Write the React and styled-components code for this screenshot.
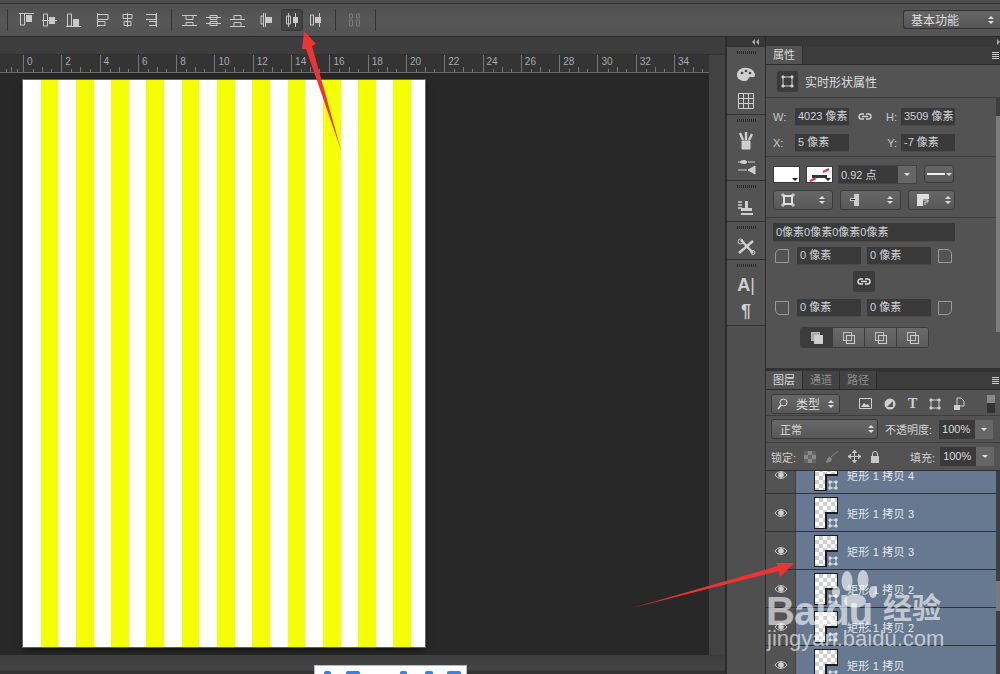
import styled, { createGlobalStyle } from "styled-components";

const GlobalStyle = createGlobalStyle`
    html, body { margin: 0; padding: 0; background: #282828; }
    * { box-sizing: border-box; }
    body { font-family: "Liberation Sans", "Noto Sans CJK SC", sans-serif; }
`

const Page = styled.div`
    position: relative;
    width: 1000px;
    height: 674px;
    overflow: hidden;
    display: flex;
    flex-direction: column;
    background: #282828;
    color: #d0d0d0;
    font-size: 11px;
`

/* options bar */
const OptionsBar = styled.div`
    flex: none;
    height: 37px;
    display: flex;
    align-items: center;
    padding-top: 3px;
    background: linear-gradient(#4d4d4d 0 3px, #333 3px 4px, #505050 4px, #575757 20px, #535353);
    border-bottom: 1px solid #2b2b2b;
`
const ToolSep = styled.div`
    flex: none;
    width: 1px;
    height: 22px;
    margin: ${({$m}) => $m || '0 8px'};
    background: #333;
`
const ToolBtn = styled.div`
    flex: none;
    width: 20px;
    height: 20px;
    margin-right: ${({$gap}) => $gap}px;
    display: flex;
    align-items: center;
    justify-content: center;
    border-radius: 2px;
    color: #c9c9c9;
    ${({$active}) => $active ? `
        background: #444;
        box-shadow: 0 0 0 1px #383838;
    ` : ''}
    ${({$dim}) => $dim ? 'color: #7b7b7b;' : ''}
`
const Workspace = styled.div`
    margin-left: auto;
    width: 97px;
    height: 19px;
    display: flex;
    align-items: center;
    justify-content: space-between;
    padding: 0 3px 0 7px;
    border: 1px solid #333;
    border-right: none;
    border-radius: 3px 0 0 3px;
    background: linear-gradient(#666, #555);
    font-size: 12px;
    color: #dcdcdc;
`

/* main */
const Main = styled.div`
    flex: 1;
    min-height: 0;
    display: flex;
`
const DocArea = styled.div`
    flex: none;
    width: 727px;
    display: flex;
    flex-direction: column;
    background: #424242;
    border-right: 2px solid #2c2c2c;
`
const DocTabs = styled.div`
    flex: none;
    height: 18px;
    background: #3d3d3d;
    border-bottom: 1px solid #333;
`
const Ruler = styled.div`
    flex: none;
    height: 18px;
    display: flex;
    background: #343434;
    border-bottom: 1px solid #6a6a6a;
    margin-right: 16px;
    overflow: hidden;
`
const RulerCell = styled.div`
    flex: none;
    width: ${({$w}) => $w}px;
    height: 17px;
    padding: 1px 0 0 3px;
    font-size: 10px;
    line-height: 12px;
    color: #a3a9b2;
    border-left: ${({$first}) => $first ? 'none' : '1px solid #777'};
    background-image:
        linear-gradient(#777, #777),
        linear-gradient(#777, #777),
        linear-gradient(#777, #777);
    background-repeat: no-repeat;
    background-size: 1px 3px, 1px 5px, 1px 3px;
    background-position: 25% 100%, 50% 100%, 75% 100%;
`
const DocBody = styled.div`
    flex: 1;
    min-height: 0;
    display: flex;
    flex-direction: column;
`
const DocMiddle = styled.div`
    flex: 1;
    min-height: 0;
    display: flex;
`
const Pasteboard = styled.div`
    flex: 1;
    padding: 7px 0 0 23px;
    background: #282828;
`
const DocScroll = styled.div`
    flex: none;
    width: 16px;
    background: #424242;
`
const Artboard = styled.div`
    width: 402px;
    height: 567px;
    display: flex;
    overflow: hidden;
    box-shadow: 0 0 0 1px rgba(170,170,170,.5), 0 3px 6px rgba(0,0,0,.6);
`
const Stripe = styled.div`
    flex: none;
    width: 17.65px;
    background: ${({$yellow}) => $yellow ? '#f4ff06' : '#ffffff'};
`
const StatusBar = styled.div`
    flex: none;
    height: 19px;
    background: linear-gradient(#3d3d3d, #454545 15px, #333 16px);
`

/* dock */
const Dock = styled.div`
    flex: none;
    width: 39px;
    display: flex;
    flex-direction: column;
    background: #4f4f4f;
    border-right: 1px solid #2c2c2c;
`
const TopStrip = styled.div`
    flex: none;
    height: 10px;
    display: flex;
    align-items: center;
    justify-content: flex-end;
    gap: 1px;
    padding-right: ${({$end}) => $end ? 0 : 6}px;
    background: #383838;
`
const CollapseTri = styled.div`
    border-top: 3px solid transparent;
    border-bottom: 3px solid transparent;
    border-${({$right}) => $right ? 'left' : 'right'}: 3px solid #aaa;
`
const DockGroup = styled.div`
    display: flex;
    flex-direction: column;
    align-items: center;
    height: ${({$h}) => $h}px;
    padding-top: 4px;
    background: #535353;
    border-top: 1px solid #333;
    border-bottom: 1px solid #333;
    margin-top: -1px;
`
const Grip = styled.div`
    width: 19px;
    height: 3px;
    margin-bottom: 6px;
    background: repeating-linear-gradient(90deg, #262626 0 1px, #5c5c5c 1px 2px);
`
const DockIcon = styled.div`
    height: 27px;
    display: flex;
    align-items: center;
    justify-content: center;
    color: #cfcfcf;
    font-size: 18px;
`
const ThinBar = styled.span`
    font-weight: 200;
`

/* panels */
const Panels = styled.div`
    flex: 1;
    min-width: 0;
    display: flex;
    flex-direction: column;
    background: #333;
`
const PanelTabs = styled.div`
    flex: none;
    height: 18px;
    display: flex;
    align-items: flex-end;
    background: #3c3c3c;
    border-bottom: 1px solid #2c2c2c;
    position: relative;
`
const PanelTab = styled.div`
    height: 18px;
    padding: 0 7px;
    line-height: 18px;
    font-size: 11px;
    color: ${({$active}) => $active ? '#dadada' : '#8f8f8f'};
    background: ${({$active}) => $active ? '#535353' : '#434343'};
    border-right: 1px solid #2c2c2c;
`
const PanelMenu = styled.div`
    position: absolute;
    right: 1px;
    top: 5px;
    width: 7px;
    height: 7px;
    background: repeating-linear-gradient(#ccc 0 1px, transparent 1px 2px);
`
const PropsPanel = styled.div`
    position: relative;
    flex: none;
    height: 303px;
    background: #535353;
`
const PropScroll = styled.div`
    position: absolute;
    right: 0;
    top: 33px;
    bottom: 36px;
    width: 4px;
    background: #3e3e3e;
`
const PropThumb = styled.div`
    position: absolute;
    left: 0;
    top: 18px;
    bottom: 0;
    width: 4px;
    background: #7c7c7c;
`
const Header = styled.div`
    height: 33px;
    display: flex;
    align-items: center;
    gap: 7px;
    padding-left: 11px;
    font-size: 12px;
    color: #dcdcdc;
    border-bottom: 1px solid #3d3d3d;
`
const ShapeBadge = styled.div`
    width: 21px;
    height: 21px;
    display: flex;
    align-items: center;
    justify-content: center;
    border-radius: 2px;
    background: #3b3b3b;
    color: #cfcfcf;
`
const Section = styled.div`
    padding: ${({$p}) => $p || '0 7px'};
    border-bottom: ${({$end}) => $end ? 'none' : '1px solid #3f3f3f'};
`
const SizeRow = styled.div`
    display: grid;
    grid-template-columns: 22px 54px 31px 21px 54px;
    align-items: center;
    height: 18px;
    margin-bottom: ${({$mb}) => $mb || 0}px;
    font-size: 11px;
`
const SizeLabel = styled.span`
    text-align: ${({$right}) => $right ? 'right' : 'left'};
    padding-right: ${({$right}) => $right ? '4px' : '0'};
    color: #c8c8c8;
`
const Field = styled.div`
    height: ${({$h}) => $h || 18}px;
    width: ${({$w}) => $w ? `${$w}px` : 'auto'};
    padding-left: 3px;
    background: #3a3a3a;
    border-bottom: 1px solid #4a4a4a;
    color: #cfd3d9;
    font-size: 11px;
    line-height: ${({$h}) => ($h || 18) - 1}px;
    white-space: nowrap;
    overflow: hidden;
`
const LinkCell = styled.div`
    display: flex;
    justify-content: center;
    color: #cfcfcf;
`
const StrokeRow = styled.div`
    display: flex;
    align-items: center;
    gap: 6px;
    height: 18px;
`
const Swatch = styled.div`
    position: relative;
    width: 27px;
    height: 17px;
    background: #fff;
    border: 1px solid #3a3a3a;
`
const SwatchCorner = styled.div`
    position: absolute;
    right: 1px;
    bottom: 1px;
    border-top: 3px solid #222;
    border-left: 3px solid transparent;
    border-right: 3px solid transparent;
`
const Combo = styled.div`
    width: 79px;
    height: 19px;
    display: flex;
    align-items: center;
    justify-content: space-between;
    margin-left: -1px;
    padding-left: 2px;
    background: #3a3a3a;
    border: 1px solid #444;
    font-size: 11px;
    color: #cfd3d9;
`
const ComboArrow = styled.div`
    width: 18px;
    height: 100%;
    display: flex;
    align-items: center;
    justify-content: center;
    background: #666;
`
const Triangle = styled.div`
    border-top: 3px solid #ddd;
    border-left: 3px solid transparent;
    border-right: 3px solid transparent;
`
const LineStyle = styled.div`
    width: 30px;
    height: 18px;
    display: flex;
    align-items: center;
    justify-content: center;
    gap: 1px;
    margin-left: 1px;
    background: linear-gradient(#676767, #575757);
    border: 1px solid #3a3a3a;
    border-radius: 3px;
`
const LineDash = styled.div`
    width: 18px;
    height: 2px;
    background: #eee;
`
const SelectRow = styled.div`
    display: flex;
    gap: 7px;
    margin-top: 7px;
    height: 20px;
`
const Select = styled.div`
    width: ${({$w}) => $w}px;
    height: 20px;
    display: flex;
    align-items: center;
    justify-content: space-between;
    padding: 0 3px 0 ${({$pl}) => $pl || 7}px;
    border: 1px solid #3a3a3a;
    border-radius: 3px;
    background: linear-gradient(#676767, #585858);
    color: #ddd;
`
const Updown = styled.div`
    display: flex;
    flex-direction: column;
    gap: 2px;
    margin-right: ${({$r}) => $r || 0}px;
`
const UpTri = styled.div`
    border-bottom: 3px solid #ddd;
    border-left: 3px solid transparent;
    border-right: 3px solid transparent;
`
const CornerRow = styled.div`
    display: flex;
    align-items: center;
    gap: 6px;
    height: 18px;
    margin-top: ${({$mt}) => $mt || 0}px;
`
const CornerIcon = styled.div`
    flex: none;
    width: 14px;
    height: 14px;
    margin: ${({$right}) => $right ? '0 0 0 1px' : '0 2px'};
    border: 1px solid #999;
    border-radius: ${({$r}) => $r};
`
const LinkBtn = styled.div`
    width: 22px;
    height: 21px;
    margin: 6px 0 7px 80px;
    display: flex;
    align-items: center;
    justify-content: center;
    border-radius: 2px;
    background: #3b3b3b;
    color: #ddd;
`
const OpSpacer = styled.div`
    height: 5px;
`
const OpGroup = styled.div`
    display: flex;
    width: 129px;
    height: 21px;
    margin-left: 34px;
    border: 1px solid #3c3c3c;
    border-radius: 3px;
    overflow: hidden;
`
const OpBtn = styled.div`
    flex: 1;
    display: flex;
    align-items: center;
    justify-content: center;
    background: ${({$active}) => $active ? '#3c3c3c' : 'linear-gradient(#6a6a6a, #5b5b5b)'};
    border-left: ${({$active}) => $active ? 'none' : '1px solid #3c3c3c'};
    color: #ccc;
`

/* layers */
const LayersPanel = styled.div`
    flex: 1;
    min-height: 0;
    margin-top: 4px;
    display: flex;
    flex-direction: column;
    background: #535353;
`
const FilterRow = styled.div`
    flex: none;
    height: 26px;
    display: flex;
    align-items: center;
    padding: 2px 5px 0 5px;
    border-bottom: 1px solid #3f3f3f;
`
const KindSelect = styled(Select)`
    height: 20px;
    font-size: 12px;
    gap: 4px;
    padding: 0 3px 0 5px;
`
const FilterIcons = styled.div`
    display: flex;
    align-items: center;
    gap: 12px;
    margin-left: 19px;
    color: #cfcfcf;
`
const FilterSerif = styled.span`
    font-family: "Liberation Serif", serif;
    font-size: 14px;
    font-weight: bold;
`
const FilterSwitch = styled.div`
    flex: none;
    width: 8px;
    height: 18px;
    margin-left: auto;
    background: linear-gradient(#888 0 8px, #333 8px);
`
const BlendRow = styled.div`
    flex: none;
    height: 27px;
    display: flex;
    align-items: center;
    padding: 0 0 0 5px;
    border-bottom: 1px solid #3f3f3f;
`
const RowLabel = styled.span`
    margin-left: ${({$m}) => $m || 0}px;
    font-size: 11px;
    color: #cfcfcf;
    white-space: nowrap;
`
const Percent = styled.div`
    display: flex;
    flex: none;
    width: 54px;
    height: 19px;
    margin-left: ${({$m}) => $m || 5}px;
    background: #3a3a3a;
    font-size: 11px;
    line-height: 19px;
    padding-left: 3px;
    color: #ddd;
    position: relative;
`
const PercentBtn = styled.div`
    position: absolute;
    right: 0;
    top: 0;
    width: 18px;
    height: 19px;
    display: flex;
    align-items: center;
    justify-content: center;
    background: #666;
`
const LockRow = styled.div`
    flex: none;
    height: 28px;
    display: flex;
    align-items: center;
    padding-left: 5px;
    border-bottom: 1px solid #333;
`
const LockIcons = styled.div`
    display: flex;
    align-items: center;
    gap: 9px;
    width: 106px;
    margin-left: 8px;
    color: #c8c8c8;
`
const LayerClip = styled.div`
    flex: 1;
    min-height: 0;
    overflow: hidden;
    position: relative;
    padding-right: 4px;
`
const LayerList = styled.div`
    margin-top: -15px;
`
const LayerRow = styled.div`
    height: 38px;
    display: flex;
    align-items: center;
    border-bottom: 1px solid #333;
`
const EyeCell = styled.div`
    flex: none;
    width: 30px;
    height: 100%;
    display: flex;
    align-items: center;
    justify-content: center;
    color: #ccc;
    background: #535353;
    border-right: 1px solid #3f3f3f;
`
const LayerBody = styled.div`
    flex: 1;
    height: 100%;
    display: flex;
    align-items: center;
    padding-left: 18px;
    background: #677990;
`
const Thumb = styled.div`
    position: relative;
    flex: none;
    width: 24px;
    height: 32px;
    border: 1px solid #1d1d1d;
    background-color: #fff;
    background-image:
        linear-gradient(45deg, #cfcfcf 25%, transparent 25%, transparent 75%, #cfcfcf 75%),
        linear-gradient(45deg, #cfcfcf 25%, transparent 25%, transparent 75%, #cfcfcf 75%);
    background-size: 8px 8px;
    background-position: 0 0, 4px 4px;
`
const ThumbNotch = styled.div`
    position: absolute;
    right: -1px;
    bottom: -1px;
    width: 13px;
    height: 17px;
    display: flex;
    align-items: flex-end;
    justify-content: center;
    padding-bottom: 1px;
    background: #677990;
    border-top: 2px solid #1d1d1d;
    border-left: 2px solid #1d1d1d;
    color: #d8dde4;
`
const LayerName = styled.span`
    margin-left: 9px;
    font-size: 11px;
    color: #e6e9ee;
    letter-spacing: .2px;
`
const LayerScroll = styled.div`
    position: absolute;
    right: 0;
    top: 0;
    bottom: 0;
    width: 4px;
    background: #3e3e3e;
`
const LayerThumb = styled.div`
    position: absolute;
    top: 110px;
    left: 0;
    width: 4px;
    height: 30px;
    background: #7a7a7a;
`

/* overlays */
const Arrows = styled.svg`
    position: absolute;
    left: 0;
    top: 0;
    pointer-events: none;
`
const Watermark = styled.div`
    position: absolute;
    left: 766px;
    top: 568px;
    width: 190px;
    height: 84px;
    color: rgba(255,255,255,.62);
`
const WmBai = styled.div`
    position: absolute;
    left: 0;
    top: 21px;
    font-size: 40px;
    font-weight: bold;
    line-height: 44px;
    letter-spacing: -1px;
`
const WmCn = styled.div`
    position: absolute;
    left: 117px;
    top: 24px;
    font-size: 29px;
    line-height: 34px;
    font-weight: bold;
`
const WmUrl = styled.div`
    position: absolute;
    left: 1px;
    top: 58px;
    font-size: 22px;
    line-height: 26px;
`
const WmPaw = styled.svg`
    position: absolute;
    left: 60px;
    top: 0;
`
const Widget = styled.div`
    position: absolute;
    left: 314px;
    top: 665px;
    width: 153px;
    height: 9px;
    display: flex;
    align-items: flex-start;
    padding: 5px 0 0 9px;
    background: #fff;
    border: 1px solid #b5bac4;
    border-bottom: none;
`
const WidgetMark = styled.div`
    width: ${({$w}) => $w}px;
    height: 5px;
    margin-left: ${({$ml}) => $ml || 0}px;
    background: #3f7fe0;
    border-radius: 2px 2px 0 0;
`

const Ic = ({ w = 18, h = 16, children }) => (
    <svg width={w} height={h} viewBox={`0 0 ${w} ${h}`} fill="none" stroke="currentColor" strokeWidth="1">
        {children}
    </svg>
)

const alignIcons = [
    <><path d="M1 1.5h15M2.5 2v11h4V2"/><rect x="8" y="3" width="6" height="7" fill="currentColor" stroke="none"/></>,
    <><path d="M1 8.5h15M2.5 2v12h4V2z"/><rect x="8" y="5" width="6" height="7" fill="currentColor" stroke="none"/></>,
    <><path d="M1 14.5h15M2.5 2v12h4V2z"/><rect x="8" y="7" width="6" height="7" fill="currentColor" stroke="none"/></>,
    <><path d="M2.5 1v14M3 2.5h10v5H3M3 9.5h7v4H3"/></>,
    <><path d="M8.5 1v14M4 2.5h9v4H4zM5 9.5h7v4H5z"/></>,
    <><path d="M14.5 1v14M4 2.5h10v5H4M7 9.5h7v4H7"/></>,
    <><path d="M1 3.5h15M1 13.5h15M5 3.5v4h7v-4M5 13.5v-3h7v3"/></>,
    <><path d="M1 5.5h15M1 11.5h15M5 3.5h7v4H5zM5 9.5h7v4H5z"/></>,
    <><path d="M1 7.5h15M1 14.5h15M5 7.5v-4h7v4M5 14.5v-4h7v4"/></>,
    <><path d="M4.5 1v14M4.5 4H2v8h2.5"/><rect x="7" y="5" width="6" height="6" fill="currentColor" stroke="none"/><path d="M6.5 1v14"/></>,
    <><path d="M5.5 1v14M12.5 1v14M3.5 4h4v8h-4z"/><rect x="10" y="5" width="5" height="6" fill="currentColor" stroke="none"/></>,
    <><path d="M12.5 1v14M3.5 3v10h3V3z"/><rect x="8" y="5" width="6" height="6" fill="currentColor" stroke="none"/></>,
]

const LinkIcon = () => (
    <Ic w={14} h={8}>
        <path d="M6 1H3.5a2.5 2.5 0 0 0 0 5H6M8 1h2.5a2.5 2.5 0 0 1 0 5H8M4 3.5h6" strokeWidth="1.4"/>
    </Ic>
)

const ShapeIcon = ({ s = 13 }) => (
    <Ic w={s} h={s}>
        <rect x="2" y="2" width={s - 4} height={s - 4}/>
        <path d={`M1 1h2v2H1zM${s - 3} 1h2v2h-2zM1 ${s - 3}h2v2H1zM${s - 3} ${s - 3}h2v2h-2z`} fill="currentColor"/>
    </Ic>
)

const Eye = () => (
    <Ic w={14} h={10}>
        <path d="M1 5c3-4.5 9-4.5 12 0-3 4.5-9 4.5-12 0z"/>
        <circle cx="7" cy="5" r="2.4" fill="currentColor"/>
    </Ic>
)

const OpIcon = ({ fill }) => (
    <Ic w={14} h={14}>
        <rect x="1.5" y="1.5" width="8" height="8" fill={fill ? '#aaa' : 'none'} stroke="#bbb"/>
        <rect x="4.5" y="4.5" width="8" height="8" fill={fill ? '#d0d0d0' : 'none'} stroke="#ccc"/>
    </Ic>
)

const dockGroups = [
    { h: 69, icons: [
        <Ic w={20} h={16}><path d="M1 9c0-5 5-8 10-7 5 0 8 4 8 7s-3 2-5 2-1 4-5 4-8-2-8-6z" fill="currentColor" stroke="none"/><circle cx="6" cy="7" r="1.3" fill="#444" stroke="none"/><circle cx="10" cy="5" r="1.3" fill="#444" stroke="none"/><circle cx="14" cy="7" r="1.3" fill="#444" stroke="none"/></Ic>,
        <Ic w={16} h={16}><path d="M.5.5h15v15H.5zM5.5.5v15M10.5.5v15M.5 5.5h15M.5 10.5h15" stroke="currentColor"/></Ic>,
    ] },
    { h: 67, icons: [
        <Ic w={16} h={19}><path d="M4 10h8v8H4z" fill="currentColor"/><path d="M5 9L2 2M8 9V1M11 9l3-6" strokeWidth="2.4"/></Ic>,
        <Ic w={19} h={16}><path d="M1 3h9M1 11h9"/><path d="M3 3c2-2 6-2 7 0-1 2-5 2-7 0zM11 11l7-4v8z" fill="currentColor"/><path d="M11 3h7"/></Ic>,
    ] },
    { h: 42, icons: [
        <Ic w={18} h={16}><path d="M1 2h4M1 5h4M1 8h4" strokeWidth="1.4"/><path d="M8 1h3v7h4v3H4V8h4zM4 13h12v2H4z" fill="currentColor" stroke="none"/></Ic>,
    ] },
    { h: 39, icons: [
        <Ic w={19} h={17}><path d="M2 15L16 3M4 2l12 13" strokeWidth="2.4"/><circle cx="3.5" cy="3.5" r="2.5"/><circle cx="16" cy="14.5" r="2"/></Ic>,
    ] },
    { h: 67, icons: [
        <span><b>A</b><ThinBar>|</ThinBar></span>,
        <span><b>¶</b></span>,
    ] },
]

const layers = ['矩形 1 拷贝 4', '矩形 1 拷贝 3', '矩形 1 拷贝 3', '矩形 1 拷贝 2', '矩形 1 拷贝 2', '矩形 1 拷贝']

const firstGaps = [3, 4, 10, 4, 3, 0]
const secondGaps = [4, 4, 10, 4, 4, 0]

export default function App() {
    return (
        <Page>
            <GlobalStyle />
            <OptionsBar>
                <ToolSep $m="0 9px 0 7px" />
                {alignIcons.slice(0, 6).map((icon, i) => (
                    <ToolBtn key={i} $gap={firstGaps[i]}><Ic>{icon}</Ic></ToolBtn>
                ))}
                <ToolSep $m="0 8px 0 10px" />
                {alignIcons.slice(6).map((icon, i) => (
                    <ToolBtn key={i} $gap={secondGaps[i]} $active={i === 4}><Ic>{icon}</Ic></ToolBtn>
                ))}
                <ToolSep $m="0 9px 0 9px" />
                <ToolBtn $dim $gap={10}><Ic><path d="M3.5 2h3v4h-3zM3.5 8h3v6h-3zM10.5 2h3v4h-3zM10.5 8h3v6h-3z"/></Ic></ToolBtn>
                <ToolSep $m="0" />
                <Workspace>
                    基本功能
                    <Updown $r={3}><UpTri /><Triangle /></Updown>
                </Workspace>
            </OptionsBar>
            <Main>
                <DocArea>
                    <DocTabs />
                    <Ruler>
                        <RulerCell $first $w={23} />
                        {Array.from({ length: 18 }, (_, i) => (
                            <RulerCell key={i} $w={38.3}>{i * 2}</RulerCell>
                        ))}
                    </Ruler>
                    <DocBody>
                        <DocMiddle>
                            <Pasteboard>
                                <Artboard>
                                    {Array.from({ length: 23 }, (_, i) => <Stripe key={i} $yellow={i % 2 === 1} />)}
                                </Artboard>
                            </Pasteboard>
                            <DocScroll />
                        </DocMiddle>
                        <StatusBar />
                    </DocBody>
                </DocArea>
                <Dock>
                    <TopStrip><CollapseTri /><CollapseTri /></TopStrip>
                    {dockGroups.map((group, i) => (
                        <DockGroup key={i} $h={group.h}>
                            <Grip />
                            {group.icons.map((icon, k) => <DockIcon key={k}>{icon}</DockIcon>)}
                        </DockGroup>
                    ))}
                </Dock>
                <Panels>
                    <TopStrip $end><CollapseTri $right /></TopStrip>
                    <PanelTabs>
                        <PanelTab $active>属性</PanelTab>
                        <PanelMenu />
                    </PanelTabs>
                    <PropsPanel>
                        <Header>
                            <ShapeBadge><ShapeIcon /></ShapeBadge>
                            实时形状属性
                        </Header>
                        <Section $p="10px 7px 4px">
                            <SizeRow $mb={8}>
                                <SizeLabel>W:</SizeLabel>
                                <Field>4023 像素</Field>
                                <LinkCell><LinkIcon /></LinkCell>
                                <SizeLabel $right>H:</SizeLabel>
                                <Field>3509 像素</Field>
                            </SizeRow>
                            <SizeRow>
                                <SizeLabel>X:</SizeLabel>
                                <Field>5 像素</Field>
                                <span />
                                <SizeLabel $right>Y:</SizeLabel>
                                <Field>-7 像素</Field>
                            </SizeRow>
                        </Section>
                        <Section $p="8px 7px 7px">
                            <StrokeRow>
                                <Swatch><SwatchCorner /></Swatch>
                                <Swatch>
                                    <svg width="25" height="15" viewBox="0 0 25 15">
                                        <path d="M5 8h15v3H5z" fill="#333"/>
                                        <path d="M3 14l6-3M16 5l6-3" stroke="#e33" strokeWidth="2"/>
                                    </svg>
                                    <SwatchCorner />
                                </Swatch>
                                <Combo>
                                    0.92 点
                                    <ComboArrow><Triangle /></ComboArrow>
                                </Combo>
                                <LineStyle><LineDash /><Triangle /></LineStyle>
                            </StrokeRow>
                            <SelectRow>
                                <Select $w={60}>
                                    <Ic w={14} h={14}><rect x="3" y="3" width="8" height="8" strokeWidth="2"/><path d="M1 1h2v2H1zM11 1h2v2h-2zM1 11h2v2H1zM11 11h2v2h-2z"/></Ic>
                                    <Updown $r={4}><UpTri /><Triangle /></Updown>
                                </Select>
                                <Select $w={61}>
                                    <Ic w={14} h={14}><path d="M6 1h5v12H6zM2 5h5v3H2z" fill="#ccc" stroke="none"/><path d="M3 6.5h4" stroke="#222"/></Ic>
                                    <Updown $r={4}><UpTri /><Triangle /></Updown>
                                </Select>
                                <Select $w={47}>
                                    <Ic w={14} h={14}><path d="M1 1h12v5H7v7H1z" fill="#ddd" stroke="none"/><path d="M7 7h5v2H9v3" fill="none" stroke="#ddd"/></Ic>
                                    <Updown><UpTri /><Triangle /></Updown>
                                </Select>
                            </SelectRow>
                        </Section>
                        <Section $p="5px 7px 5px" $end>
                            <Field $h={19} $w={182}>0像素0像素0像素0像素</Field>
                            <CornerRow $mt={5}>
                                <CornerIcon $r="5px 0 0 0" />
                                <Field $w={64}>0 像素</Field>
                                <Field $w={64}>0 像素</Field>
                                <CornerIcon $right $r="0 5px 0 0" />
                            </CornerRow>
                            <LinkBtn><LinkIcon /></LinkBtn>
                            <CornerRow>
                                <CornerIcon $r="0 0 0 5px" />
                                <Field $w={64}>0 像素</Field>
                                <Field $w={64}>0 像素</Field>
                                <CornerIcon $right $r="0 0 5px 0" />
                            </CornerRow>
                        </Section>
                        <Section $p="0" $end>
                            <OpSpacer />
                            <OpGroup>
                                <OpBtn $active><OpIcon fill /></OpBtn>
                                <OpBtn><OpIcon /></OpBtn>
                                <OpBtn><OpIcon /></OpBtn>
                                <OpBtn><OpIcon /></OpBtn>
                            </OpGroup>
                        </Section>
                        <PropScroll><PropThumb /></PropScroll>
                    </PropsPanel>
                    <LayersPanel>
                        <PanelTabs>
                            <PanelTab $active>图层</PanelTab>
                            <PanelTab>通道</PanelTab>
                            <PanelTab>路径</PanelTab>
                            <PanelMenu />
                        </PanelTabs>
                        <FilterRow>
                            <KindSelect $w={69}>
                                <Ic w={11} h={12}><circle cx="6.5" cy="4.5" r="3.5"/><path d="M4 7l-3 4" strokeWidth="1.6"/></Ic>
                                类型
                                <Updown $r={2}><UpTri /><Triangle /></Updown>
                            </KindSelect>
                            <FilterIcons>
                                <Ic w={13} h={11}><path d="M.5.5h12v10H.5z"/><path d="M2 9l3-4 2 2 2-1 2 3z" fill="currentColor" stroke="none"/></Ic>
                                <Ic w={12} h={12}><circle cx="6" cy="6" r="5.5" fill="currentColor" stroke="none"/><path d="M3 9l6-6v6z" fill="#555" stroke="none"/></Ic>
                                <FilterSerif>T</FilterSerif>
                                <ShapeIcon s={12} />
                                <Ic w={12} h={14}><path d="M4 1h4l3 3v5H4z"/><path d="M1 8h6v5H1z" fill="currentColor" stroke="none"/></Ic>
                            </FilterIcons>
                            <FilterSwitch />
                        </FilterRow>
                        <BlendRow>
                            <Select $w={107} $pl={8}>
                                正常
                                <Updown><UpTri /><Triangle /></Updown>
                            </Select>
                            <RowLabel $m={7}>不透明度:</RowLabel>
                            <Percent $m={7}>100%<PercentBtn><Triangle /></PercentBtn></Percent>
                        </BlendRow>
                        <LockRow>
                            <RowLabel>锁定:</RowLabel>
                            <LockIcons>
                                <Ic w={12} h={12}><path d="M0 0h12v12H0z" fill="#8a8a8a" stroke="none"/><path d="M0 0h4v4H0zM8 0h4v4H8zM4 4h4v4H4zM0 8h4v4H0zM8 8h4v4H8z" fill="#666" stroke="none"/></Ic>
                                <Ic w={14} h={13}><path d="M13 1L6 7M5 7c-2 0-2 3-4 5 3 0 6 0 5-4" stroke="#888" fill="#888"/></Ic>
                                <Ic w={13} h={13}><path d="M6.5 0v13M0 6.5h13M6.5 0L4.5 2.5h4zM6.5 13l-2-2.5h4zM0 6.5L2.5 4.500v4zM13 6.5l-2.5-2v4z"/></Ic>
                                <Ic w={10} h={12}><path d="M2.5 5V3a2.5 2.5 0 0 1 5 0v2"/><rect x="1" y="5" width="8" height="7" fill="currentColor" stroke="none"/></Ic>
                            </LockIcons>
                            <RowLabel>填充:</RowLabel>
                            <Percent>100%<PercentBtn><Triangle /></PercentBtn></Percent>
                        </LockRow>
                        <LayerClip>
                            <LayerList>
                                {layers.map((name, i) => (
                                    <LayerRow key={i}>
                                        <EyeCell><Eye /></EyeCell>
                                        <LayerBody>
                                            <Thumb>
                                                <ThumbNotch><ShapeIcon s={10} /></ThumbNotch>
                                            </Thumb>
                                            <LayerName>{name}</LayerName>
                                        </LayerBody>
                                    </LayerRow>
                                ))}
                            </LayerList>
                            <LayerScroll><LayerThumb /></LayerScroll>
                        </LayerClip>
                    </LayersPanel>
                </Panels>
            </Main>
            <Watermark>
                <WmPaw width="60" height="40" viewBox="0 0 60 40">
                    <g fill="currentColor">
                        <ellipse cx="21" cy="13" rx="5.5" ry="10"/>
                        <ellipse cx="37" cy="12" rx="5.5" ry="10"/>
                        <ellipse cx="10" cy="24" rx="4" ry="6"/>
                        <ellipse cx="47" cy="24" rx="4" ry="6"/>
                        <ellipse cx="29" cy="33" rx="11" ry="7"/>
                    </g>
                </WmPaw>
                <WmBai>Baidu</WmBai>
                <WmCn>经验</WmCn>
                <WmUrl>jingyan.baidu.com</WmUrl>
            </Watermark>
            <Arrows width="1000" height="674" viewBox="0 0 1000 674">
                <path d="M304 31L316 44 312 46 341 150 306 49 302 49z" fill="#ee3333"/>
                <path d="M632 608L778 566 776 563 794 563 780 577 779 571z" fill="#ee3333"/>
            </Arrows>
            <Widget>
                <WidgetMark $w={7} />
                <WidgetMark $w={14} $ml={15} />
                <WidgetMark $w={7} $ml={40} />
                <WidgetMark $w={8} $ml={18} />
                <WidgetMark $w={14} $ml={14} />
            </Widget>
        </Page>
    )
}
